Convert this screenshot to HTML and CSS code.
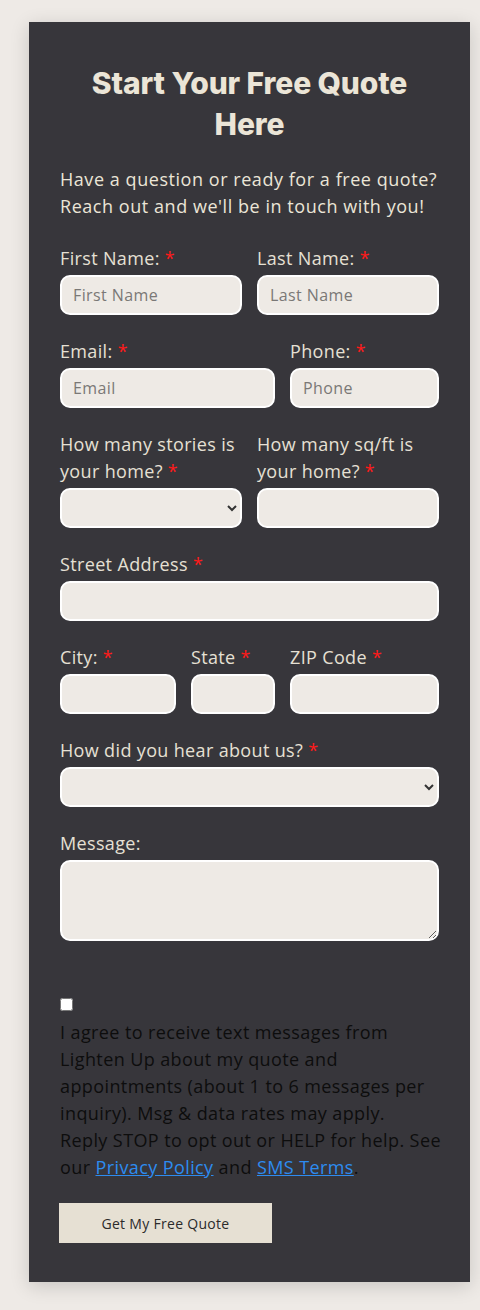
FILE: index.html
```html
<!DOCTYPE html>
<html lang="en">
<head>
<meta charset="utf-8">
<title>Start Your Free Quote</title>
<link rel="stylesheet" href="styles.css">
</head>
<body>
<div class="card">
  <h2 class="title">Start Your Free Quote Here</h2>
  <p class="intro">Have a question or ready for a free quote?<br>Reach out and we'll be in touch with you!</p>
  <form class="form">
    <div class="row cols-half">
      <div class="field"><label class="label">First Name: <span class="req">*</span></label><input class="input" type="text" placeholder="First Name"></div>
      <div class="field"><label class="label">Last Name: <span class="req">*</span></label><input class="input" type="text" placeholder="Last Name"></div>
    </div>
    <div class="row cols-contact">
      <div class="field"><label class="label">Email: <span class="req">*</span></label><input class="input" type="email" placeholder="Email"></div>
      <div class="field"><label class="label">Phone: <span class="req">*</span></label><input class="input" type="tel" placeholder="Phone"></div>
    </div>
    <div class="row cols-half">
      <div class="field"><label class="label">How many stories is<br>your home? <span class="req">*</span></label><select class="input select"><option></option></select></div>
      <div class="field"><label class="label">How many sq/ft is<br>your home? <span class="req">*</span></label><input class="input" type="text"></div>
    </div>
    <div class="row">
      <div class="field"><label class="label">Street Address <span class="req">*</span></label><input class="input" type="text"></div>
    </div>
    <div class="row cols-city">
      <div class="field"><label class="label">City: <span class="req">*</span></label><input class="input" type="text"></div>
      <div class="field"><label class="label">State <span class="req">*</span></label><input class="input" type="text"></div>
      <div class="field"><label class="label">ZIP Code <span class="req">*</span></label><input class="input" type="text"></div>
    </div>
    <div class="row">
      <div class="field"><label class="label">How did you hear about us? <span class="req">*</span></label><select class="input select"><option></option></select></div>
    </div>
    <div class="row">
      <div class="field"><label class="label">Message:</label><textarea class="input textarea"></textarea></div>
    </div>
    <div class="consent">
      <input class="check" type="checkbox">
      <p class="consent-text">I agree to receive text messages from<br>Lighten Up about my quote and<br>appointments (about 1 to 6 messages per<br>inquiry). Msg &amp; data rates may apply.<br>Reply STOP to opt out or HELP for help. See<br>our <a class="link" href="#">Privacy Policy</a> and <a class="link" href="#">SMS Terms</a>.</p>
    </div>
    <button class="submit" type="button">Get My Free Quote</button>
  </form>
</div>
</body>
</html>
```

FILE: styles.css
```css
html, body {
  margin: 0;
  padding: 0;
  background: #eeeae6;
}
body {
  padding: 22px 10px 28px 29px;
  font-family: "Open Sans", "Liberation Sans", sans-serif;
}
.card {
  width: 441px;
  box-sizing: border-box;
  background: #37363b;
  padding: 41px 31px 39px 31px;
  box-shadow: 0 4px 18px rgba(0, 0, 0, 0.16);
}
.title {
  margin: 0;
  text-align: center;
  font-family: Inter, "Liberation Sans", sans-serif;
  font-weight: 800;
  font-size: 30px;
  line-height: 41px;
  letter-spacing: -0.1px;
  color: #ebe5d7;
  padding: 0 20px;
}
.intro {
  margin: 21px 0 25px 0;
  font-size: 18px;
  line-height: 27px;
  letter-spacing: 0.55px;
  color: #ebe5d7;
  white-space: nowrap;
}
.form {
  display: flex;
  flex-direction: column;
  gap: 23px;
}
.row {
  display: grid;
  grid-template-columns: 1fr;
  column-gap: 15px;
}
.cols-half { grid-template-columns: 1fr 1fr; }
.cols-contact { grid-template-columns: 215px 149px; }
.cols-city { grid-template-columns: 116px 84px 149px; }
.field {
  display: flex;
  flex-direction: column;
}
.label {
  font-size: 18px;
  line-height: 27px;
  letter-spacing: 0.35px;
  color: #e6e0d4;
  margin-bottom: 3px;
  white-space: nowrap;
}
.req { color: #ff1a1a; }
.input {
  box-sizing: border-box;
  width: 100%;
  height: 40px;
  background: #eeeae5;
  border: 2px solid #ffffff;
  border-radius: 10px;
  padding: 0 11px;
  font-family: "Open Sans", "Liberation Sans", sans-serif;
  font-size: 16px;
  letter-spacing: 0.4px;
  color: #333;
  outline: none;
}
.input::placeholder { color: #7a7876; }
.select { padding: 0 6px 0 10px; }
.textarea {
  height: 81px;
  padding: 8px 12px;
  resize: vertical;
  display: block;
}
.consent {
  margin-top: 34px;
  display: flex;
  flex-direction: column;
  align-items: flex-start;
}
.check {
  margin: 0;
  width: 13px;
  height: 13px;
}
.consent-text {
  margin: 8px 0 0 0;
  font-size: 18px;
  line-height: 27px;
  letter-spacing: 0.4px;
  color: #0d0d0d;
  white-space: nowrap;
}
.link {
  color: #2d8cf0;
  text-decoration: underline;
}
.submit {
  margin-top: -1px;
  margin-left: -1px;
  width: 213px;
  height: 40px;
  background: #e6e0d3;
  border: none;
  border-radius: 0;
  font-family: "Open Sans", "Liberation Sans", sans-serif;
  font-size: 14px;
  letter-spacing: 0.3px;
  color: #2b2b2b;
  cursor: pointer;
}
```
